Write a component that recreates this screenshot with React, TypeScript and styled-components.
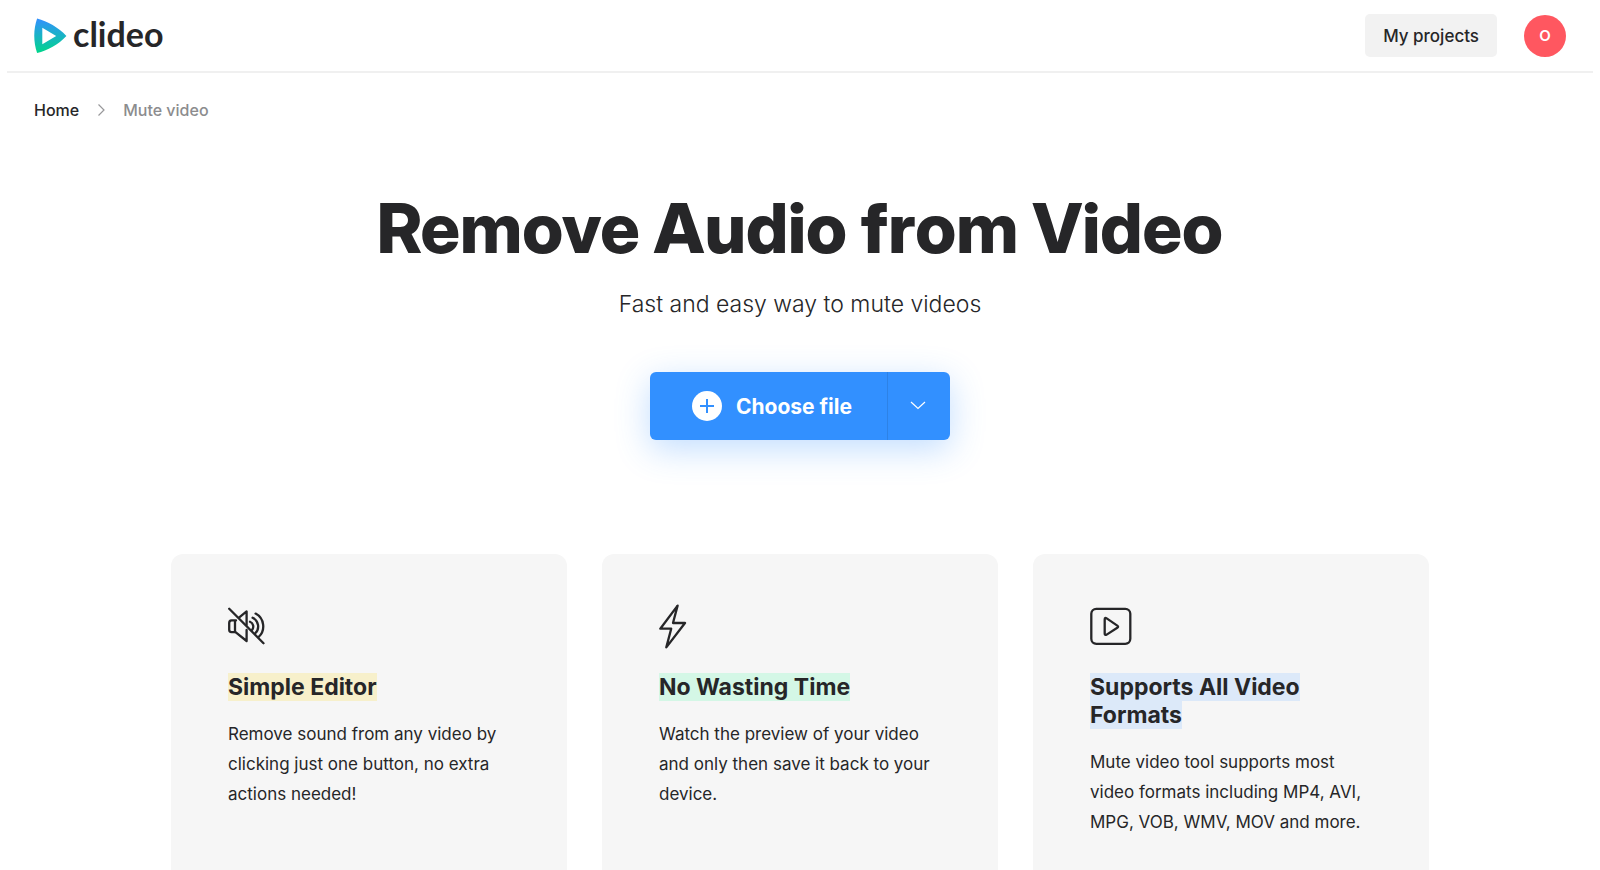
import React from "react";
import styled, { createGlobalStyle } from "styled-components";

const ink = "#262628";

const GlobalStyle = createGlobalStyle`
  *, *::before, *::after { box-sizing: border-box; }
  body {
    margin: 0;
    background: #fff;
    color: ${ink};
    font-family: Inter, "Liberation Sans", sans-serif;
    -webkit-font-smoothing: antialiased;
  }
  h1, h2, p, ol, ul { margin: 0; padding: 0; }
  ol, ul { list-style: none; }
  a { color: inherit; text-decoration: none; }
  button { font: inherit; color: inherit; border: 0; cursor: pointer; }
`;

const Header = styled.header`
  display: flex;
  align-items: center;
  justify-content: space-between;
  height: 73px;
  margin: 0 7px;
  padding: 0 27px;
  border-bottom: 2px solid #f0f0f0;
`;

const Logo = styled.a`
  display: flex;
  align-items: center;
  gap: 6px;
`;

const Wordmark = styled.span`
  padding-bottom: 4px;
  font-family: Lato, sans-serif;
  font-size: 34px;
  font-weight: 700;
  line-height: 36px;
`;

const Actions = styled.div`
  display: flex;
  align-items: center;
  gap: 27px;
`;

const ProjectsButton = styled.button`
  height: 43px;
  padding: 0 18px;
  border-radius: 5px;
  background: #f2f2f2;
  font-size: 17px;
  font-weight: 500;
`;

const Avatar = styled.button`
  width: 42px;
  height: 42px;
  padding: 0;
  border-radius: 50%;
  background: #ff5760;
  color: #fff;
  font-size: 15px;
  font-weight: 600;
`;

const Breadcrumbs = styled.ol`
  display: flex;
  align-items: center;
  gap: 18px;
  padding: 27px 34px 0;
  font-size: 16px;
  font-weight: 500;
  line-height: 20px;
`;

const Crumb = styled.li<{ $current?: boolean }>`
  display: flex;
  align-items: center;
  gap: 18px;
  color: ${(p) => (p.$current ? "#8c8c8e" : ink)};
`;

const Hero = styled.section`
  display: flex;
  flex-direction: column;
  align-items: center;
  padding: 68px 34px 114px;
  text-align: center;
`;

const Title = styled.h1`
  font-family: "Inter Display", Inter, "Liberation Sans", sans-serif;
  font-size: 69px;
  font-weight: 800;
  line-height: 80px;
`;

const Subtitle = styled.p`
  margin-top: 20px;
  font-size: 23px;
  font-weight: 300;
  line-height: 32px;
`;

const Upload = styled.div`
  display: flex;
  height: 68px;
  margin-top: 52px;
  border-radius: 6px;
  background: #3290ff;
  color: #fff;
  box-shadow: 0 9px 34px rgba(50, 144, 255, 0.3);
`;

const ChooseButton = styled.button`
  display: flex;
  align-items: center;
  gap: 14px;
  padding: 0 35px 0 42px;
  background: transparent;
  color: #fff;
  font-size: 21px;
  font-weight: 700;
`;

const MoreButton = styled.button`
  display: flex;
  align-items: center;
  justify-content: center;
  width: 63px;
  padding: 0 2px 0 0;
  border-left: 1px solid #2d82e6;
  background: transparent;
  color: #fff;
`;

const Cards = styled.ul`
  display: grid;
  grid-template-columns: repeat(3, 1fr);
  gap: 35px;
  max-width: 1326px;
  margin: 0 auto;
  padding: 0 34px 60px;
`;

const Card = styled.li`
  min-height: 340px;
  padding: 49px 57px;
  border-radius: 12px;
  background: #f6f6f6;
`;

const CardIcon = styled.div`
  display: flex;
  align-items: center;
  height: 46px;
  margin-bottom: 24px;
`;

const CardTitle = styled.h2`
  font-size: 23px;
  font-weight: 700;
  line-height: 28px;
`;

const Highlight = styled.span<{ $color: string }>`
  background: ${(p) => p.$color};
`;

const CardText = styled.p`
  margin-top: 18px;
  font-size: 17px;
  line-height: 30px;
`;

const LogoMark = () => (
  <svg width="33" height="36" viewBox="0 0 33 36" aria-hidden="true">
    <defs>
      <linearGradient id="mark" x1="0" y1="0" x2="0" y2="1">
        <stop offset="0" stopColor="#3290ff" />
        <stop offset="1" stopColor="#00d68a" />
      </linearGradient>
    </defs>
    <path
      fill="url(#mark)"
      fillRule="evenodd"
      d="M3.100.5C13.500 3.300 24.500 9.400 32.400 17.900C24.500 26.400 13.500 32.500 3.100 35.100C-.7 23.400-.7 11.900 3.100.5ZM8.300 9.800V26.200L22.200 18Z"
    />
  </svg>
);

const MuteIcon = () => (
  <svg width="38" height="38" viewBox="0 0 38 38" fill="none" stroke={ink} strokeWidth="2.300" strokeLinecap="round" strokeLinejoin="round" aria-hidden="true">
    <path d="M1.200 1.800L35.500 36.200" />
    <path d="M8 13.400H3.500A2.500 2.500 0 0 0 1.200 15.900V22.700A2.500 2.500 0 0 0 3.500 25.200H7V13.400" />
    <path d="M7.500 25.200L18.600 34V23M11 10.600L18.600 4.400V18" />
    <path d="M22 14.800A5.200 5.200 0 0 1 24 23M24.600 10.800A9.500 9.500 0 0 1 27 26.500M27.600 6.600A14.500 14.500 0 0 1 30.600 30" />
  </svg>
);

const BoltIcon = () => (
  <svg width="28" height="46" viewBox="0 0 28 46" fill="none" stroke={ink} strokeWidth="2.300" strokeLinecap="round" strokeLinejoin="round" aria-hidden="true">
    <path d="M18.600 2.600L1.300 25.700H12.200L7.300 44.400L26 20H14Z" />
  </svg>
);

const PlayIcon = () => (
  <svg width="42" height="38" viewBox="0 0 42 38" fill="none" stroke={ink} strokeWidth="2.300" strokeLinejoin="round" aria-hidden="true">
    <rect x="1.300" y="1.800" width="39" height="35" rx="5" />
    <path d="M14.700 12.400V26.400Q14.700 28.700 16.700 27.600L27.300 20.800Q28.900 19.700 27.300 18.600L16.700 11.400Q14.700 10.300 14.700 12.400Z" />
  </svg>
);

const features = [
  {
    icon: <MuteIcon />,
    color: "#f7f0cb",
    title: "Simple Editor",
    text: "Remove sound from any video by clicking just one button, no extra actions needed!",
  },
  {
    icon: <BoltIcon />,
    color: "#d4f7e6",
    title: "No Wasting Time",
    text: "Watch the preview of your video and only then save it back to your device.",
  },
  {
    icon: <PlayIcon />,
    color: "#dce9f9",
    title: "Supports All Video Formats",
    text: "Mute video tool supports most video formats including MP4, AVI, MPG, VOB, WMV, MOV and more.",
  },
];

export default function App() {
  return (
    <>
      <GlobalStyle />
      <Header>
        <Logo href="#">
          <LogoMark />
          <Wordmark>clideo</Wordmark>
        </Logo>
        <Actions>
          <ProjectsButton type="button">My projects</ProjectsButton>
          <Avatar type="button">O</Avatar>
        </Actions>
      </Header>
      <nav aria-label="Breadcrumb">
        <Breadcrumbs>
          <Crumb>
            <a href="#">Home</a>
            <svg width="8" height="12" viewBox="0 0 8 12" fill="none" stroke="#98989a" strokeWidth="1.200" aria-hidden="true">
              <path d="M1.500.5L7 6L1.500 11.500" />
            </svg>
          </Crumb>
          <Crumb $current aria-current="page">Mute video</Crumb>
        </Breadcrumbs>
      </nav>
      <main>
        <Hero>
          <Title>Remove Audio from Video</Title>
          <Subtitle>Fast and easy way to mute videos</Subtitle>
          <Upload>
            <ChooseButton type="button">
              <svg width="30" height="30" viewBox="0 0 30 30" aria-hidden="true">
                <circle cx="15" cy="15" r="15" fill="#fff" />
                <path d="M15 8V22M8 15H22" stroke="#3290ff" strokeWidth="2" />
              </svg>
              Choose file
            </ChooseButton>
            <MoreButton type="button" aria-label="More sources">
              <svg width="16" height="10" viewBox="0 0 16 10" fill="none" stroke="currentColor" strokeWidth="1.200" aria-hidden="true">
                <path d="M1 1L8 7.500L15 1" />
              </svg>
            </MoreButton>
          </Upload>
        </Hero>
        <Cards>
          {features.map((f) => (
            <Card key={f.title}>
              <CardIcon>{f.icon}</CardIcon>
              <CardTitle>
                <Highlight $color={f.color}>{f.title}</Highlight>
              </CardTitle>
              <CardText>{f.text}</CardText>
            </Card>
          ))}
        </Cards>
      </main>
    </>
  );
}
